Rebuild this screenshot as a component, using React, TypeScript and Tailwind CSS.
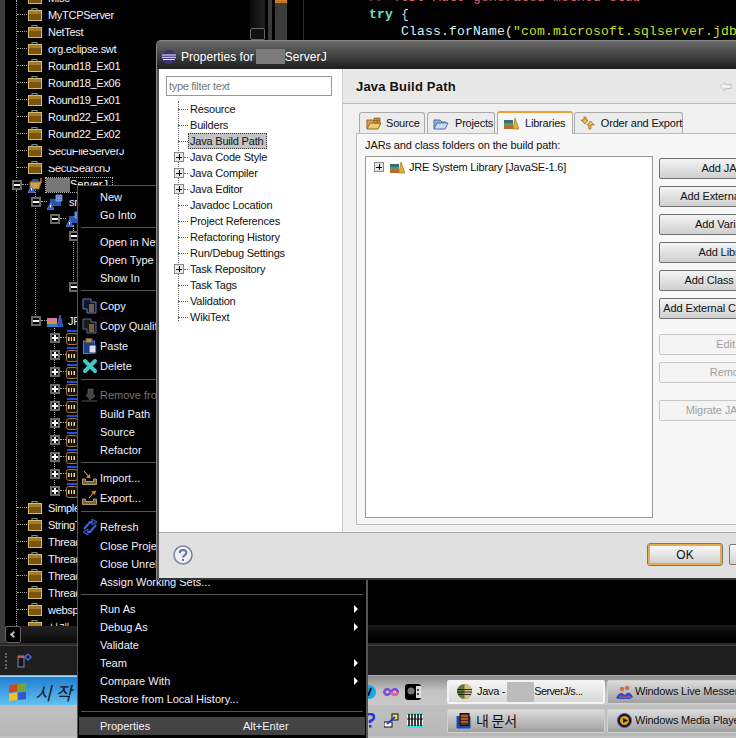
import React from "react";

const Project = () => (
  <svg width="16" height="15" viewBox="0 0 16 15" className="shrink-0">
    <path d="M5 3 V1.5 H10 V3" fill="none" stroke="#6f8f8f" strokeWidth="1.2" />
    <rect x="1.5" y="3.5" width="13" height="10" fill="#7a5510" stroke="#d8b870" />
    <rect x="2" y="4" width="12" height="3" fill="#a67c22" />
  </svg>
);

const JavaProject = () => (
  <svg width="17" height="16" viewBox="0 0 17 16" className="shrink-0">
    <path d="M2 5 L5 2 H10 L11 5 Z" fill="#2b4fa8" />
    <path d="M2 5 H13 L11 12 H2 Z" fill="#c9a24a" stroke="#8a6a20" />
    <path d="M13 1 V5 Q13 6 11 6" fill="none" stroke="#e0a040" strokeWidth="1.2" />
    <path d="M3.5 9 L7 15.5 H0 Z" fill="#2a56d8" stroke="#9ab0f0" strokeWidth="0.5" />
    <rect x="3" y="11" width="1" height="2.5" fill="#fff" />
  </svg>
);

const SrcFolder = () => (
  <svg width="17" height="16" viewBox="0 0 17 16" className="shrink-0">
    <rect x="3" y="5" width="11" height="7" fill="#2b55b0" />
    <path d="M9 1 H15 V7 H9 Z M12 1 V7 M9 4 H15" fill="#4070d0" stroke="#a8c0f0" strokeWidth="0.7" />
    <path d="M3.5 9 L7 15.5 H0 Z" fill="#2a56d8" stroke="#9ab0f0" strokeWidth="0.5" />
    <rect x="3" y="11" width="1" height="2.5" fill="#fff" />
  </svg>
);

const Books = ({ w = 16 }: { w?: number }) => (
  <svg width={w} height="13" viewBox="0 0 16 13" className="shrink-0">
    <rect x="0" y="10" width="10" height="3" fill="#3a7fc0" />
    <rect x="0" y="7" width="10" height="3" fill="#e09030" />
    <rect x="0" y="4" width="10" height="3" fill="#d878a0" />
    <path d="M10 13 L13 1 L16 13 Z" fill="#2050c8" stroke="#6c8ee0" strokeWidth="0.6" />
  </svg>
);

const Books2 = () => (
  <svg width="15" height="13" viewBox="0 0 15 13" className="shrink-0">
    <rect x="0" y="9" width="9" height="3" fill="#b86a30" />
    <rect x="0" y="6" width="9" height="3" fill="#5f9a50" />
    <rect x="0" y="3" width="9" height="3" fill="#3a6a80" />
    <path d="M9 12 L11 1 L15 12 Z" fill="#e0b040" stroke="#a07818" strokeWidth="0.7" />
  </svg>
);

const Jar = () => (
  <svg width="12" height="15" viewBox="0 0 12 15" className="shrink-0">
    <rect x="1" y="0" width="11" height="2" fill="#2050e0" />
    <rect x="0.5" y="3.5" width="11" height="11" rx="2" fill="#1c1408" stroke="#a07840" />
    <rect x="2" y="7" width="1.5" height="4" fill="#e8d8b0" />
    <rect x="5" y="7" width="1" height="4" fill="#e8d8b0" />
    <rect x="7.5" y="7" width="1.5" height="4" fill="#e8d8b0" />
  </svg>
);

const CopyIcon = () => (
  <svg width="16" height="16" viewBox="0 0 16 16">
    <path d="M1 1 H9 V4 H14 V15 H5 V11 H1 Z" fill="#101830" stroke="#6a80b0" />
    <path d="M7 7 H12 M7 9 H12 M7 11 H12 M7 13 H12" stroke="#d0a060" />
  </svg>
);

const CopyQ = () => (
  <svg width="16" height="16" viewBox="0 0 16 16">
    <path d="M1 1 H9 V4 H14 V15 H5 V11 H1 Z" fill="#1c1a18" stroke="#5a6a90" />
    <path d="M7 7 H12 M7 9 H12 M7 11 H12 M7 13 H12" stroke="#c8a068" />
  </svg>
);

const PasteIcon = () => (
  <svg width="16" height="16" viewBox="0 0 16 16">
    <rect x="1.5" y="3" width="11" height="12.5" fill="#1a3f90" stroke="#5080d8" />
    <rect x="4" y="0.5" width="6" height="4" fill="#b09070" stroke="#705030" />
    <rect x="7" y="7" width="7" height="8" fill="#d8e0f0" stroke="#203060" />
  </svg>
);

const DeleteIcon = () => (
  <svg width="16" height="16" viewBox="0 0 16 16">
    <path d="M3 3 L13 13 M13 3 L3 13" stroke="#40c8c8" strokeWidth="4" strokeLinecap="round" />
  </svg>
);

const RemoveIcon = () => (
  <svg width="16" height="16" viewBox="0 0 16 16">
    <path d="M0 14 H15" stroke="#555" />
    <path d="M6 2 H11 V7 L13 9 L8 13 L4 8 L6 7 Z" fill="#444" stroke="#666" strokeWidth="0.6" />
  </svg>
);

const ImportIcon = () => (
  <svg width="17" height="16" viewBox="0 0 17 16">
    <path d="M1.5 9 V14.5 H15.5 V9 H12.5 V11.5 H4.5 V9 Z" fill="#7a6238" stroke="#b09a68" />
    <path d="M3 1 L8 7" stroke="#e0c080" />
    <path d="M9.5 8.5 L5 7.5 L9 4 Z" fill="#e08030" />
  </svg>
);

const ExportIcon = () => (
  <svg width="17" height="16" viewBox="0 0 17 16">
    <path d="M1.5 9 V14.5 H15.5 V9 H12.5 V11.5 H4.5 V9 Z" fill="#7a6238" stroke="#b09a68" />
    <path d="M8 8 L13 2" stroke="#e0c080" />
    <path d="M15 0.5 L10 1.5 L14 5 Z" fill="#e08030" />
  </svg>
);

const RefreshIcon = () => (
  <svg width="16" height="16" viewBox="0 0 16 16" fill="none">
    <path d="M2 10 L8 3 L11 3" stroke="#3868e8" strokeWidth="2" />
    <path d="M14 6 L8 13 L5 13" stroke="#3868e8" strokeWidth="2" />
    <path d="M10 0 L15 3 L10 6 Z" fill="#10204a" stroke="#4878f0" strokeWidth="0.8" />
    <path d="M6 10 L1 13 L6 16 Z" fill="#10204a" stroke="#4878f0" strokeWidth="0.8" />
  </svg>
);

const Eclipse = ({ s = 14 }: { s?: number }) => (
  <svg width={s} height={s} viewBox="0 0 14 14" className="shrink-0">
    <circle cx="7" cy="7" r="7" fill="#3a3578" />
    <path d="M0 5 H14 M0 7.3 H14 M1 9.5 H13" stroke="#f0f0f8" strokeWidth="1" />
  </svg>
);

const EclipseTask = () => (
  <svg width="15" height="15" viewBox="0 0 15 15" className="shrink-0">
    <circle cx="7.5" cy="7.5" r="7.5" fill="#5f7a30" />
    <path d="M7.5 0 A7.5 7.5 0 0 1 7.5 15 Z" fill="#d8c080" />
    <path d="M0 5.5 H15 M0 8 H15 M1 10.5 H14" stroke="#1a1a1a" strokeWidth="0.9" />
  </svg>
);

type TreeRow = {
  label: string;
  kind: "project" | "java" | "src" | "pkg" | "jre" | "jar" | "leaf";
  pad: string;
  toggle?: "-" | "+";
  clip?: boolean;
  sel?: boolean;
};

const Toggle = ({ t, light }: { t: "-" | "+"; light?: boolean }) => (
  <div
    className={
      light
        ? "w-[10px] h-[10px] shrink-0 border border-[#888] bg-[#e8e8e8] flex items-center justify-center relative"
        : "w-[10px] h-[10px] shrink-0 border-2 border-[#6a6a6a] bg-black flex items-center justify-center relative"
    }
  >
    <div className={light ? "w-[6px] h-px bg-black" : "w-[6px] h-[2px] bg-white shrink-0"} />
    {t === "+" && <div className={light ? "absolute w-px h-[6px] bg-black" : "absolute w-[2px] h-[6px] bg-white"} />}
  </div>
);

const projRows = (names: string[]): TreeRow[] => names.map((label) => ({ label, kind: "project", pad: "pl-[12px]" }));

const treeRows: TreeRow[] = [
  ...projRows(["Misc", "MyTCPServer", "NetTest", "org.eclipse.swt", "Round18_Ex01", "Round18_Ex06", "Round19_Ex01", "Round22_Ex01", "Round22_Ex02"]),
  { label: "SecuFileServerJ", kind: "project", pad: "pl-[12px]", clip: true },
  { label: "SecuSearchJ", kind: "project", pad: "pl-[12px]", clip: true },
  { label: "", kind: "java", pad: "pl-[7px]", toggle: "-", sel: true },
  { label: "src", kind: "src", pad: "pl-[26px]", toggle: "-" },
  { label: "", kind: "pkg", pad: "pl-[45px]", toggle: "-" },
  { label: "", kind: "leaf", pad: "pl-[64px]", toggle: "-" },
  { label: "", kind: "leaf", pad: "pl-[64px]" },
  { label: "", kind: "leaf", pad: "pl-[64px]" },
  { label: "", kind: "leaf", pad: "pl-[64px]", toggle: "-" },
  { label: "", kind: "leaf", pad: "pl-[64px]" },
  { label: "JRE", kind: "jre", pad: "pl-[26px]", toggle: "-" },
  ...Array.from({ length: 10 }, (): TreeRow => ({ label: "", kind: "jar", pad: "pl-[45px]", toggle: "+" })),
  ...projRows(["SimpleServer", "StringTest", "ThreadEx01", "ThreadEx02", "ThreadEx03", "ThreadEx04", "webspider", "사개"]),
];

const RowIcon = ({ k }: { k: TreeRow["kind"] }) => {
  if (k === "project") return <Project />;
  if (k === "java") return <JavaProject />;
  if (k === "src" || k === "pkg") return <SrcFolder />;
  if (k === "jre") return <Books />;
  if (k === "jar") return <Jar />;
  return null;
};

const Tree = () => (
  <div className="relative w-[245px] h-[626px] overflow-hidden bg-black">
    <div className="absolute left-[11px] top-0 h-[178px] border-l border-dotted border-[#aaa]" />
    <div className="absolute left-[30px] top-[190px] h-[125px] border-l border-dotted border-[#aaa]" />
    <div className="absolute left-[49px] top-[325px] h-[170px] border-l border-dotted border-[#aaa]" />
    <div className="absolute left-[68px] top-[225px] h-[60px] border-l border-dotted border-[#aaa]" />
    <div className="absolute left-[11px] top-[190px] h-[436px] border-l border-dotted border-[#aaa]" />
    <div className="-mt-[11px] relative">
      {treeRows.map((r, i) => (
        <div key={i} className={`flex items-center h-[17px] ${r.pad}`}>
          {r.toggle && <Toggle t={r.toggle} />}
          {r.kind !== "leaf" && <div className={`${r.toggle ? "w-[6px]" : "w-[10px]"} border-t border-dotted border-[#aaa] shrink-0`} />}
          <RowIcon k={r.kind} />
          {r.sel ? (
            <div className="w-[68px] h-[16px] border border-dotted border-[#bbb] bg-black flex items-center text-[11px] text-white leading-none overflow-hidden">
              <div className="w-[24px] h-[15px] bg-[#777] shrink-0" />
              <span className="[clip-path:inset(0_0_5px_0)]">ServerJ</span>
            </div>
          ) : (
            <span className={`ml-[5px] mt-[2px] text-[11px] tracking-[-0.3px] text-[#f4f4ff] whitespace-nowrap ${r.clip ? "[clip-path:inset(6px_0_0_0)]" : ""}`}>{r.label}</span>
          )}
        </div>
      ))}
    </div>
  </div>
);

type MI =
  | { sep: true }
  | { sep?: false; label: string; icon?: React.ReactNode; tall?: boolean; arrow?: boolean; dim?: boolean; hot?: boolean; key2?: string };

const menu: MI[] = [
  { label: "New" },
  { label: "Go Into" },
  { sep: true },
  { label: "Open in New Window" },
  { label: "Open Type Hierarchy" },
  { label: "Show In" },
  { sep: true },
  { label: "Copy", tall: true, icon: <CopyIcon /> },
  { label: "Copy Qualified Name", tall: true, icon: <CopyQ /> },
  { label: "Paste", tall: true, icon: <PasteIcon /> },
  { label: "Delete", tall: true, icon: <DeleteIcon /> },
  { sep: true },
  { label: "Remove from Context", tall: true, dim: true, icon: <RemoveIcon /> },
  { label: "Build Path" },
  { label: "Source" },
  { label: "Refactor" },
  { sep: true },
  { label: "Import...", tall: true, icon: <ImportIcon /> },
  { label: "Export...", tall: true, icon: <ExportIcon /> },
  { sep: true },
  { label: "Refresh", tall: true, icon: <RefreshIcon /> },
  { label: "Close Project" },
  { label: "Close Unrelated Projects" },
  { label: "Assign Working Sets..." },
  { sep: true },
  { label: "Run As", arrow: true },
  { label: "Debug As", arrow: true },
  { label: "Validate" },
  { label: "Team", arrow: true },
  { label: "Compare With", arrow: true },
  { label: "Restore from Local History..." },
  { sep: true },
  { label: "Properties", hot: true, key2: "Alt+Enter" },
];

const ContextMenu = () => (
  <div className="absolute left-[77px] top-[185px] w-[291px] h-[553px] bg-black border-l border-t border-r-2 border-[#555] pt-[2px] z-10">
    {menu.map((m, i) =>
      m.sep ? (
        <div key={i} className="h-[9px] pt-[3px] px-[3px]">
          <div className="h-px bg-[#555]" />
        </div>
      ) : (
        <div
          key={i}
          className={`flex items-center ml-[1px] mr-[1px] ${m.tall ? "h-[20px]" : "h-[18px]"} ${m.hot ? "bg-[#444]" : ""} text-[11px] ${m.dim ? "text-[#777]" : "text-[#f0f0ff]"}`}
        >
          <div className="w-[21px] flex justify-center shrink-0">{m.icon}</div>
          <span className="w-[143px] whitespace-nowrap">{m.label}</span>
          {m.key2 && <span>{m.key2}</span>}
          {m.arrow && (
            <div className="ml-auto mr-[7px] w-0 h-0 border-y-[4px] border-y-transparent border-l-[4px] border-l-white" />
          )}
        </div>
      )
    )}
  </div>
);

const props = [
  { t: "Resource" },
  { t: "Builders" },
  { t: "Java Build Path", sel: true },
  { t: "Java Code Style", plus: true },
  { t: "Java Compiler", plus: true },
  { t: "Java Editor", plus: true },
  { t: "Javadoc Location" },
  { t: "Project References" },
  { t: "Refactoring History" },
  { t: "Run/Debug Settings" },
  { t: "Task Repository", plus: true },
  { t: "Task Tags" },
  { t: "Validation" },
  { t: "WikiText" },
];

const PropTree = () => (
  <div className="relative mt-[5px]">
    <div className="absolute left-[12px] top-0 h-[220px] border-l border-dotted border-[#666]" />
    {props.map((p) => (
      <div key={p.t} className="flex items-center h-[16px] relative text-[11px] tracking-[-0.2px] text-[#111]">
        {p.plus ? (
          <div className="ml-[8px] flex items-center">
            <Toggle t="+" light />
            <div className="w-[4px] border-t border-dotted border-[#666]" />
          </div>
        ) : (
          <div className="ml-[12px] w-[10px] border-t border-dotted border-[#666]" />
        )}
        {p.sel ? (
          <span className="bg-[#c4c4c4] border border-dotted border-[#333] pl-[1px] pr-[3px] leading-[14px] whitespace-nowrap">{p.t}</span>
        ) : (
          <span className="ml-[2px] whitespace-nowrap">{p.t}</span>
        )}
      </div>
    ))}
  </div>
);

const SourceIc = () => (
  <svg width="16" height="13" viewBox="0 0 16 13">
    <path d="M1 12 V3 H7 L9 5 H12 V7" fill="#d8a850" stroke="#906820" />
    <path d="M1 12 L4 6 H15 L12 12 Z" fill="#f0c878" stroke="#906820" />
    <path d="M8 1 H14 V6 H8 Z M11 1 V6 M8 3.5 H14" fill="#d09840" stroke="#805818" strokeWidth="0.7" />
  </svg>
);
const ProjIc = () => (
  <svg width="16" height="13" viewBox="0 0 16 13">
    <path d="M1 12 V3 H7 L9 5 H13 V7" fill="#90b0e0" stroke="#5070a8" />
    <path d="M1 12 L4 6 H15 L12 12 Z" fill="#c8dcf4" stroke="#5070a8" />
  </svg>
);
const OrderIc = () => (
  <svg width="16" height="14" viewBox="0 0 16 14">
    <path d="M4 1 V4 H1 L5 8 L8 4 H6 V1 Z" fill="#f0c040" stroke="#906820" strokeWidth="0.8" />
    <path d="M11 13 V9 H14.5 L10.5 5 L7 9 H9 V13 Z" fill="#f0c040" stroke="#906820" strokeWidth="0.8" />
  </svg>
);

const tabBase = "flex items-center h-[21px] border border-b-0 border-[#aaa] rounded-t-[3px] bg-[#ececec] text-[11px] tracking-[-0.2px] text-[#111] whitespace-nowrap";

const btn = "h-[21px] w-[142px] shrink-0 flex items-center justify-center rounded-[2px] text-[11px] tracking-[-0.1px] whitespace-nowrap";
const btnOn = `${btn} border border-[#707070] bg-linear-to-b from-[#f4f4f4] to-[#cfcfcf] text-[#111]`;
const btnOff = `${btn} border border-[#c8c8c8] bg-[#f4f4f4] text-[#a0a0a0]`;

const Dialog = () => (
  <div className="absolute left-[156px] top-[40px] w-[600px] h-[540px] z-20 flex flex-col bg-[#555] rounded-tl-[5px] border-t border-l border-[#888] overflow-hidden">
    <div className="h-[28px] shrink-0 bg-linear-to-b from-[#6a6a6a] via-[#444] to-[#1e1e1e] flex items-center pl-[5px] pt-[3px] text-white text-[12px] font-medium">
      <Eclipse />
      <span className="ml-[5px] tracking-[0.05px]">Properties for</span>
      <div className="ml-[2px] w-[29px] h-[15px] bg-[#7c7c7c] -mt-[1px]" />
      <span className="tracking-[0.1px]">ServerJ</span>
    </div>
    <div className="flex-1 ml-[2px] flex flex-col bg-[#e0e0e0] border-b-2 border-[#333]">
      <div className="h-[464px] flex border-b border-[#aaa]">
        <div className="w-[184px] bg-white pt-[7px] pl-[7px] border-r border-[#ccc] shrink-0">
          <div className="w-[166px] h-[20px] border border-[#999] flex items-center pl-[2px] text-[11px] tracking-[-0.3px] text-[#777]">type filter text</div>
          <PropTree />
        </div>
        <div className="flex-1 flex flex-col bg-[#f0f0f0]">
          <div className="h-[35px] flex items-center pl-[13px] bg-[#e8e8e8] border-b border-[#bbb] shrink-0">
            <span className="font-bold text-[13px] text-[#111] tracking-[0.2px] mt-[2px]">Java Build Path</span>
            <svg width="13" height="11" viewBox="0 0 13 11" className="ml-[263px]">
              <path d="M1 5.5 L6 1 V3.5 H12 V7.5 H6 V10 Z" fill="#f0f0f0" stroke="#c4c4c4" />
            </svg>
          </div>
          <div className="pl-[16px] pt-[7px] flex items-end gap-[2px] h-[29px] shrink-0">
            <div className={`${tabBase} w-[66px] pl-[6px] gap-[4px]`}><SourceIc /><span>Source</span></div>
            <div className={`${tabBase} w-[68px] pl-[5px] gap-[6px]`}><ProjIc /><span>Projects</span></div>
            <div className="flex items-center h-[23px] w-[76px] -mb-px z-10 pl-[6px] gap-[6px] border-x border-[#aaa] border-t-2 border-t-[#e8a030] rounded-t-[3px] bg-[#f7f7f7] text-[11px] tracking-[-0.2px] text-[#111]"><Books2 /><span>Libraries</span></div>
            <div className={`${tabBase} w-[109px] -ml-px pl-[5px] gap-[5px]`}><OrderIc /><span>Order and Export</span></div>
          </div>
          <div className="ml-[13px] h-[392px] w-[400px] border-l border-t border-b border-[#bbb] bg-[#f7f7f7] pl-[8px] pt-[4px]">
            <div className="text-[11px] tracking-[-0.1px] text-[#111] h-[18px] leading-[14px]">JARs and class folders on the build path:</div>
            <div className="flex gap-[6px]">
              <div className="w-[288px] h-[362px] bg-white border border-[#999] pt-[3px] pl-[8px] shrink-0">
                <div className="flex items-center h-[14px] text-[11px] tracking-[-0.2px] text-[#111]">
                  <Toggle t="+" light />
                  <div className="ml-[6px]"><Books2 /></div>
                  <span className="ml-[4px] whitespace-nowrap">JRE System Library [JavaSE-1.6]</span>
                </div>
              </div>
              <div className="flex flex-col shrink-0 pt-[2px]">
                <div className={btnOn}>Add JARs...</div>
                <div className={`${btnOn} mt-[7px]`}>Add External JARs...</div>
                <div className={`${btnOn} mt-[7px]`}>Add Variable...</div>
                <div className={`${btnOn} mt-[7px]`}>Add Library...</div>
                <div className={`${btnOn} mt-[7px]`}>Add Class Folder...</div>
                <div className={`${btnOn} mt-[7px]`}>Add External Class Folder...</div>
                <div className={`${btnOff} mt-[15px]`}>Edit...</div>
                <div className={`${btnOff} mt-[7px]`}>Remove</div>
                <div className={`${btnOff} mt-[17px]`}>Migrate JAR File...</div>
              </div>
            </div>
          </div>
        </div>
      </div>
      <div className="flex-1 flex items-center pl-[14px] pb-[2px]">
        <svg width="20" height="20" viewBox="0 0 20 20" className="shrink-0">
          <circle cx="10" cy="10" r="9" fill="#eef0f4" stroke="#7888a0" strokeWidth="1.6" />
          <path d="M6.8 8 C6.8 3.8 13.4 4 13.4 7.8 C13.4 10.4 10 10.2 10 12.6" fill="none" stroke="#66738c" strokeWidth="2" />
          <rect x="9" y="14" width="2" height="2" fill="#66738c" />
        </svg>
        <div className="ml-[455px] w-[74px] h-[21px] flex items-center justify-center rounded-[2px] border-2 border-[#eba94a] bg-linear-to-b from-[#fafafa] to-[#d0d0d0] text-[12px] text-[#111] outline outline-[#777] shrink-0">OK</div>
        <div className="ml-[7px] w-[74px] h-[21px] rounded-[2px] border border-[#777] bg-linear-to-b from-[#fafafa] to-[#d0d0d0] shrink-0" />
      </div>
    </div>
  </div>
);

const TaskBtn = ({ w, on, children }: { w: string; on?: boolean; children: React.ReactNode }) => (
  <div
    className={`${w} h-[24px] shrink-0 rounded-[2px] flex items-center overflow-hidden text-[11px] tracking-[-0.2px] whitespace-nowrap text-[#111] ${
      on ? "bg-linear-to-b from-[#f4f4f4] to-[#d8d8d8] border-2 border-[#f4f4f4]" : "bg-linear-to-b from-[#dcdcdc] to-[#a0a0a0] border border-[#d0d0d0]"
    }`}
  >
    {children}
  </div>
);

const Messenger = () => (
  <svg width="17" height="14" viewBox="0 0 17 14" className="shrink-0">
    <circle cx="6" cy="4" r="2.2" fill="#c87050" />
    <circle cx="11" cy="3" r="2.2" fill="#c87050" />
    <path d="M0 13 Q4 5 9 10 Q13 4 17 12 L14 14 H2 Z" fill="#3050c0" />
    <path d="M3 12 H15" stroke="#a04888" strokeWidth="2" />
  </svg>
);
const Media = () => (
  <svg width="15" height="15" viewBox="0 0 15 15" className="shrink-0">
    <circle cx="7.5" cy="7.5" r="7" fill="#181818" stroke="#3060c0" />
    <circle cx="7.5" cy="7.5" r="4.5" fill="#e0a020" />
    <path d="M6 5 L11 7.5 L6 10 Z" fill="#181818" />
  </svg>
);
const MyDocs = () => (
  <svg width="15" height="16" viewBox="0 0 15 16" className="shrink-0">
    <rect x="0.5" y="3" width="14" height="12.5" rx="1" fill="#1a48c0" />
    <rect x="4" y="0.5" width="9" height="12" fill="#5a3010" stroke="#201008" />
    <path d="M5 3 H12 M5 6 H12 M5 9 H12" stroke="#e89040" />
  </svg>
);

const Quick = () => (
  <svg width="15" height="16" viewBox="0 0 15 16">
    <circle cx="7" cy="8" r="7" fill="#18a8e8" />
    <path d="M9 4 L6 12" stroke="#111" strokeWidth="2" />
  </svg>
);
const Q2 = () => (
  <svg width="16" height="16" viewBox="0 0 16 16">
    <path d="M1 8 Q4 2 8 8 Q12 14 15 8 Q12 2 8 8 Q4 14 1 8 Z" fill="none" stroke="#7848e0" strokeWidth="2.5" />
    <path d="M8 8 Q12 14 15 8" fill="none" stroke="#e86090" strokeWidth="2.5" />
  </svg>
);
const Q3 = () => (
  <svg width="16" height="16" viewBox="0 0 16 16">
    <rect width="16" height="16" rx="3" fill="#000" />
    <circle cx="6" cy="7" r="3.5" fill="#777" />
    <path d="M11 2 H16 V14 H11 Z" fill="#ddd" />
    <circle cx="13" cy="6" r="1" fill="#111" />
    <circle cx="13" cy="10" r="1" fill="#111" />
  </svg>
);
const Q4 = () => (
  <svg width="14" height="16" viewBox="0 0 14 16">
    <path d="M4 4 Q4 1 8 1 Q12 1 12 4 Q12 7 8 8 V10" fill="none" stroke="#2038e0" strokeWidth="2.5" />
    <rect x="7" y="12" width="2.5" height="2.5" fill="#2038e0" />
  </svg>
);
const Q5 = () => (
  <svg width="15" height="15" viewBox="0 0 15 15">
    <rect x="0" y="9" width="8" height="5" fill="#fff" stroke="#111" />
    <rect x="8" y="1" width="6" height="6" fill="#f0e040" stroke="#111" />
    <path d="M3 11 L11 4" stroke="#2040e0" strokeWidth="2" />
  </svg>
);
const Q6 = () => (
  <svg width="16" height="15" viewBox="0 0 16 15">
    <rect width="16" height="15" fill="#40e0e0" />
    <rect y="2" width="16" height="10" fill="#fff" />
    <path d="M2 1 V13 M5 1 V13 M8 1 V13 M11 1 V13 M14 1 V13" stroke="#111" strokeWidth="1.6" />
    <path d="M0 6 H16" stroke="#111" />
  </svg>
);

export default function App() {
  return (
    <div className="relative w-[736px] h-[738px] overflow-hidden bg-black font-['Liberation_Sans',Arial,sans-serif]">
      <div className="h-[643px] flex">
        <div className="w-[5px] h-full bg-[#3c3c3c] shrink-0" />
        <div className="flex flex-col shrink-0">
          <Tree />
          <div className="h-[17px] flex bg-linear-to-b from-[#222] to-[#0a0a0a]">
            <div className="w-[16px] h-full border border-[#666] rounded-[2px] flex items-center justify-center bg-black">
              <div className="w-[5px] h-[5px] border-l-2 border-b-2 border-[#bbb] rotate-45" />
            </div>
          </div>
        </div>
        <div className="w-[15px] shrink-0 h-[40px] flex flex-col justify-end bg-linear-to-r from-[#0a0a0a] to-[#222]">
          <div className="h-[12px] border border-[#666] rounded-[2px] bg-[#111]" />
        </div>
        <div className="w-[3px] shrink-0" />
        <div className="w-[4px] shrink-0 h-[40px] bg-[#3a3a3a]" />
        <div className="w-[3px] shrink-0" />
        <div className="w-[12px] shrink-0 h-[40px] bg-[#3c3c3c] flex flex-col">
          <div className="h-[3px] bg-[#5a7fa8] border border-[#d08030]" />
        </div>
        <div className="w-[17px] shrink-0 h-[40px] border-r border-[#2a2a2a]" />
        <div className="flex-1 flex flex-col relative overflow-hidden">
          <div className="flex-1 pl-[65px] font-['Liberation_Mono',monospace] text-[13px] leading-[17px] whitespace-pre -mt-[11px] tracking-[0.2px]">
            <div className="text-[#e06060]">// TODO Auto-generated method stub</div>
            <div className="text-[#66e0c0] font-bold">try <span className="text-[#ddd] font-normal">{"{"}</span></div>
            <div className="pl-[32px] text-[#d8f0ff]">
              Class.forName(<span className="text-[#c8e020]">"com.microsoft.sqlserver.jdbc.SQLServerDriver"</span>);
            </div>
          </div>
          <div className="h-[18px] bg-linear-to-b from-[#1c1c1c] to-black shrink-0" />
        </div>
      </div>
      <div className="h-[2px] bg-[#2a2a2a]" />
      <div className="h-[30px] bg-[#1e1e1e] flex items-center pl-[5px] border-t border-[#444]">
        <div className="w-[1px] h-[16px] border-l-2 border-dotted border-[#666]" />
        <svg width="16" height="14" viewBox="0 0 16 14" className="ml-[10px]">
          <rect x="1" y="2" width="6" height="11" fill="#15132a" stroke="#888" />
          <rect x="1" y="2" width="6" height="2" fill="#c06040" />
          <path d="M11 0 L14 3 L11 6 L8 3 Z" fill="none" stroke="#4868f0" strokeWidth="1.4" />
        </svg>
      </div>
      <div className="h-[63px] flex flex-col bg-[#c0c0c0]">
        <div className="h-[32px] flex items-center bg-linear-to-b from-[#8c8c8c] via-[#c4c4c4] to-[#c8c8c8] border-t border-[#aaa]">
          <div className="w-[77px] h-[31px] shrink-0 self-start bg-linear-to-b from-[#1f7fd0] to-[#66c4f4] flex items-center pl-[8px] border-t border-[#9fd8f8]">
            <svg width="20" height="18" viewBox="0 0 20 18" className="shrink-0 -skew-y-6">
              <rect x="1" y="1" width="8" height="7.5" fill="#d04820" />
              <rect x="10" y="1" width="8" height="7.5" fill="#70a830" />
              <rect x="1" y="9.5" width="8" height="7.5" fill="#f0c020" />
              <rect x="10" y="9.5" width="8" height="7.5" fill="#3058d0" />
            </svg>
            <span className="ml-[7px] text-[18px] italic text-[#101828] font-['Noto_Sans_CJK_KR',sans-serif] leading-none whitespace-nowrap">시 작</span>
          </div>
          <div className="w-[285px] shrink-0" />
          <div className="w-[85px] shrink-0 flex items-center gap-[6px]">
            <Quick /><Q2 /><Q3 />
          </div>
          <TaskBtn w="w-[158px]" on>
            <div className="ml-[8px]"><EclipseTask /></div>
            <span className="ml-[5px] tracking-[-0.3px]">Java -</span>
            <div className="ml-[2px] w-[27px] h-[24px] bg-[#bcbcbc] shrink-0" />
            <span className="tracking-[-0.6px]">ServerJ/s...</span>
          </TaskBtn>
          <div className="w-[2px] shrink-0" />
          <TaskBtn w="w-[141px]">
            <div className="ml-[8px]"><Messenger /></div>
            <span className="ml-[2px]">Windows Live Messenger</span>
          </TaskBtn>
        </div>
        <div className="h-[31px] flex items-center bg-linear-to-b from-[#c0c0c0] to-[#b8b8b8] -mt-[2px]">
          <div className="w-[362px] shrink-0" />
          <div className="w-[85px] shrink-0 flex items-center gap-[8px]">
            <Q4 /><Q5 /><Q6 />
          </div>
          <TaskBtn w="w-[158px]">
            <div className="ml-[8px]"><MyDocs /></div>
            <span className="ml-[5px] text-[14px] font-['Noto_Sans_CJK_KR',sans-serif]">내 문서</span>
          </TaskBtn>
          <div className="w-[2px] shrink-0" />
          <TaskBtn w="w-[141px]">
            <div className="ml-[9px]"><Media /></div>
            <span className="ml-[3px]">Windows Media Player</span>
          </TaskBtn>
        </div>
      </div>
      <ContextMenu />
      <Dialog />
    </div>
  );
}
